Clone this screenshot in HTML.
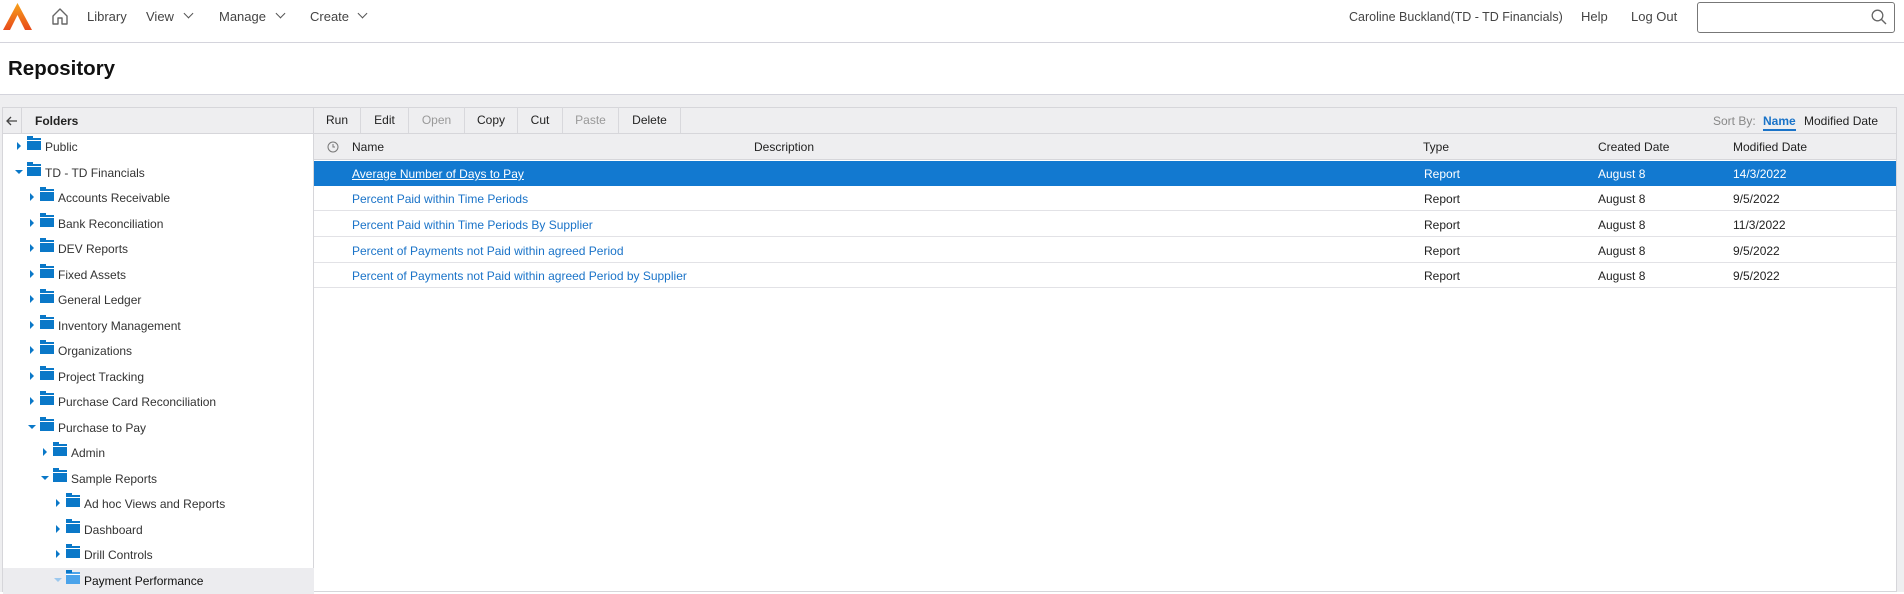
<!DOCTYPE html>
<html><head><style>
*{margin:0;padding:0;box-sizing:border-box}
body{width:1904px;height:592px;overflow:hidden;background:#fff;font-family:"Liberation Sans",sans-serif;color:#222;position:relative}
.a{position:absolute;white-space:nowrap}
.nav{font-size:13px;color:#444;top:9px}
.chev{position:absolute;top:10px;width:7px;height:7px;border-right:1.3px solid #555;border-bottom:1.3px solid #555;transform:rotate(45deg)}
.btn{position:absolute;top:107px;height:26px;line-height:26px;font-size:12px;text-align:center;border-right:1px solid #d8d8dc;color:#222}
.hd{font-size:12px;color:#222;top:140px}
.row{position:absolute;left:314px;width:1582px;height:25px;border-bottom:1px solid #e2e2e6;font-size:12px}
.row span{position:absolute;top:6px}
.row .n{left:38px;color:#1a73c8}
.t{position:absolute;height:25px;font-size:12px;color:#333;left:0;width:311px}
.t i{position:absolute;top:8px;width:0;height:0}
.t .r{border-top:4px solid transparent;border-bottom:4px solid transparent;border-left:4px solid #0a78c8}
.t .d{top:10px;border-left:4px solid transparent;border-right:4px solid transparent;border-top:4px solid #0a78c8}
.t b{position:absolute;top:4px;width:14px;height:12px;background:#0a78c8;border-top:2px solid #0a78c8}
.t b:before{content:"";position:absolute;left:0;top:-4px;width:6px;height:3px;background:#0a78c8}
.t b:after{content:"";position:absolute;left:0;top:0;width:14px;height:1px;background:#fff}
.t span{position:absolute;top:6px}
</style></head><body>
<svg class="a" style="left:3px;top:3px" width="29" height="27" viewBox="0 0 29 27"><defs><linearGradient id="g" x1="0" y1="0" x2="0" y2="1"><stop offset="0" stop-color="#f7a21b"/><stop offset="1" stop-color="#e84a1b"/></linearGradient></defs><path d="M14.5 0 L29 27 L22 27 L14.5 12 L7 27 L0 27 Z" fill="url(#g)"/></svg>
<svg class="a" style="left:52px;top:8px" width="16" height="17" viewBox="0 0 16 17"><path d="M1 8 L8 1 L15 8 V16 H10 V10 H6 V16 H1 Z" fill="none" stroke="#666" stroke-width="1.4" stroke-linejoin="round"/></svg>
<div class="a nav" style="left:87px">Library</div>
<div class="a nav" style="left:146px">View</div><div class="chev" style="left:185px"></div>
<div class="a nav" style="left:219px">Manage</div><div class="chev" style="left:277px"></div>
<div class="a nav" style="left:310px">Create</div><div class="chev" style="left:359px"></div>
<div class="a nav" style="left:1349px;font-size:12.5px;top:10px">Caroline Buckland(TD - TD Financials)</div>
<div class="a nav" style="left:1581px;font-size:13px">Help</div>
<div class="a nav" style="left:1631px;font-size:13px">Log Out</div>
<div class="a" style="left:1697px;top:2px;width:198px;height:31px;border:1px solid #777;border-radius:3px"></div>
<svg class="a" style="left:1871px;top:9px" width="16" height="16" viewBox="0 0 16 16"><circle cx="6.5" cy="6.5" r="5.3" fill="none" stroke="#666" stroke-width="1.3"/><path d="M10.5 10.5 L15 15" stroke="#666" stroke-width="1.4"/></svg>
<div class="a" style="left:0;top:42px;width:1904px;height:1px;background:#d4d4dc"></div>
<div class="a" style="left:8px;top:57px;font-size:20.5px;font-weight:bold;color:#111">Repository</div>
<div class="a" style="left:0;top:94px;width:1904px;height:498px;background:#eeeef0;border-top:1px solid #d4d4dc"></div>
<div class="a" style="left:2px;top:107px;width:1895px;height:485px;background:#fff;border:1px solid #d6d6da"></div>
<div class="a" style="left:3px;top:108px;width:1893px;height:26px;background:#eeeef0;border-bottom:1px solid #d6d6da"></div>
<div class="a" style="left:313px;top:108px;width:1px;height:484px;background:#d6d6da"></div>
<div class="a" style="left:21px;top:108px;width:1px;height:26px;background:#d6d6da"></div>
<svg class="a" style="left:6px;top:116px" width="12" height="10" viewBox="0 0 12 10"><path d="M11 5 H1 M5 1 L1 5 L5 9" fill="none" stroke="#444" stroke-width="1.3"/></svg>
<div class="a" style="left:35px;top:114px;font-size:12px;font-weight:bold">Folders</div>
<div class="btn" style="left:314px;width:47px">Run</div>
<div class="btn" style="left:361px;width:48px">Edit</div>
<div class="btn" style="left:409px;width:56px;color:#999">Open</div>
<div class="btn" style="left:465px;width:53px">Copy</div>
<div class="btn" style="left:518px;width:45px">Cut</div>
<div class="btn" style="left:563px;width:56px;color:#999">Paste</div>
<div class="btn" style="left:619px;width:62px">Delete</div>
<div class="a" style="left:1713px;top:114px;font-size:12px;color:#888">Sort By:</div>
<div class="a" style="left:1763px;top:114px;font-size:12px;color:#1a73c8;font-weight:bold;border-bottom:2px solid #1a73c8;padding-bottom:1px">Name</div>
<div class="a" style="left:1804px;top:114px;font-size:12px">Modified Date</div>
<div class="a" style="left:314px;top:134px;width:1582px;height:26px;background:#eeeef0;border-bottom:1px solid #d6d6da"></div>
<svg class="a" style="left:327px;top:141px" width="12" height="12" viewBox="0 0 12 12"><circle cx="6" cy="6" r="5" fill="none" stroke="#777"/><path d="M6 3 V6 H8" fill="none" stroke="#777"/></svg>
<div class="a hd" style="left:352px">Name</div>
<div class="a hd" style="left:754px">Description</div>
<div class="a hd" style="left:1423px">Type</div>
<div class="a hd" style="left:1598px">Created Date</div>
<div class="a hd" style="left:1733px">Modified Date</div>
<div class="row" style="top:161px;background:#1279d0;color:#fff;border-bottom:none"><span class="n" style="color:#fff;text-decoration:underline">Average Number of Days to Pay</span><span style="left:1110px">Report</span><span style="left:1284px">August 8</span><span style="left:1419px">14/3/2022</span></div>
<div class="row" style="top:186px"><span class="n">Percent Paid within Time Periods</span><span style="left:1110px">Report</span><span style="left:1284px">August 8</span><span style="left:1419px">9/5/2022</span></div>
<div class="row" style="top:212px"><span class="n">Percent Paid within Time Periods By Supplier</span><span style="left:1110px">Report</span><span style="left:1284px">August 8</span><span style="left:1419px">11/3/2022</span></div>
<div class="row" style="top:238px"><span class="n">Percent of Payments not Paid within agreed Period</span><span style="left:1110px">Report</span><span style="left:1284px">August 8</span><span style="left:1419px">9/5/2022</span></div>
<div class="row" style="top:263px"><span class="n">Percent of Payments not Paid within agreed Period by Supplier</span><span style="left:1110px">Report</span><span style="left:1284px">August 8</span><span style="left:1419px">9/5/2022</span></div>
<div class="a" style="left:3px;top:134px;width:310px;height:458px">
<div class="t" style="top:0"><i class="r" style="left:14px"></i><b style="left:24px"></b><span style="left:42px">Public</span></div>
<div class="t" style="top:25.5px"><i class="d" style="left:12px"></i><b style="left:24px"></b><span style="left:42px">TD - TD Financials</span></div>
<div class="t" style="top:51px"><i class="r" style="left:27px"></i><b style="left:37px"></b><span style="left:55px">Accounts Receivable</span></div>
<div class="t" style="top:76.5px"><i class="r" style="left:27px"></i><b style="left:37px"></b><span style="left:55px">Bank Reconciliation</span></div>
<div class="t" style="top:102px"><i class="r" style="left:27px"></i><b style="left:37px"></b><span style="left:55px">DEV Reports</span></div>
<div class="t" style="top:127.5px"><i class="r" style="left:27px"></i><b style="left:37px"></b><span style="left:55px">Fixed Assets</span></div>
<div class="t" style="top:153px"><i class="r" style="left:27px"></i><b style="left:37px"></b><span style="left:55px">General Ledger</span></div>
<div class="t" style="top:178.5px"><i class="r" style="left:27px"></i><b style="left:37px"></b><span style="left:55px">Inventory Management</span></div>
<div class="t" style="top:204px"><i class="r" style="left:27px"></i><b style="left:37px"></b><span style="left:55px">Organizations</span></div>
<div class="t" style="top:229.5px"><i class="r" style="left:27px"></i><b style="left:37px"></b><span style="left:55px">Project Tracking</span></div>
<div class="t" style="top:255px"><i class="r" style="left:27px"></i><b style="left:37px"></b><span style="left:55px">Purchase Card Reconciliation</span></div>
<div class="t" style="top:280.5px"><i class="d" style="left:25px"></i><b style="left:37px"></b><span style="left:55px">Purchase to Pay</span></div>
<div class="t" style="top:306px"><i class="r" style="left:40px"></i><b style="left:50px"></b><span style="left:68px">Admin</span></div>
<div class="t" style="top:331.5px"><i class="d" style="left:38px"></i><b style="left:50px"></b><span style="left:68px">Sample Reports</span></div>
<div class="t" style="top:357px"><i class="r" style="left:53px"></i><b style="left:63px"></b><span style="left:81px">Ad hoc Views and Reports</span></div>
<div class="t" style="top:382.5px"><i class="r" style="left:53px"></i><b style="left:63px"></b><span style="left:81px">Dashboard</span></div>
<div class="t" style="top:408px"><i class="r" style="left:53px"></i><b style="left:63px"></b><span style="left:81px">Drill Controls</span></div>
<div class="t" style="top:434px;background:#ececef;height:26px"><i class="d" style="left:51px;border-top-color:#9cc8ee"></i><b style="left:63px;background:#4ba3ea;border-top-color:#4ba3ea"></b><span style="left:81px;color:#111">Payment Performance</span></div>
</div>
</body></html>
